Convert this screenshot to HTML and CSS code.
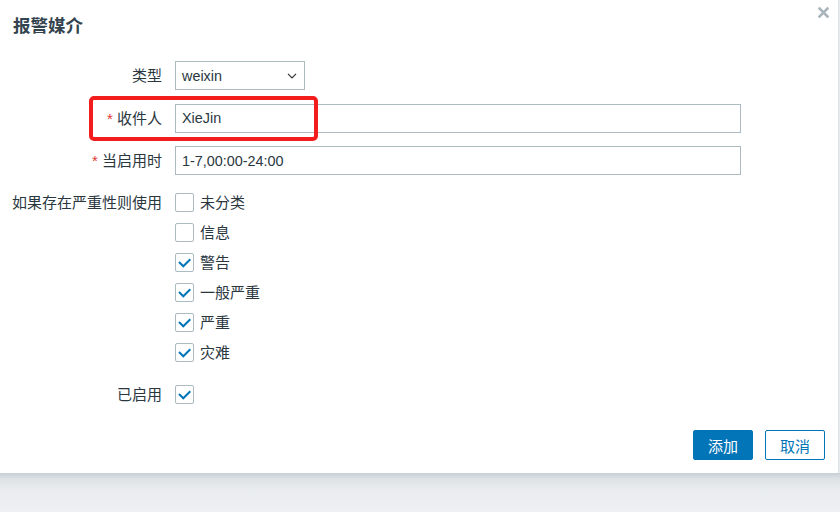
FILE: index.html
```html
<!DOCTYPE html>
<html lang="zh-CN">
<head>
  <meta charset="UTF-8">
  <meta name="viewport" content="width=device-width, initial-scale=1.0">
  <title>报警媒介</title>
  <link rel="stylesheet" href="styles.css">
</head>
<body>
  <div class="overlay-dialogue">
    <div class="dialogue-header">
      <h4>报警媒介</h4>
      <button class="btn-close" title="关闭">
        <svg width="11" height="11" viewBox="0 0 11 11"><path d="M1.5 1.5 L9.5 9.5 M9.5 1.5 L1.5 9.5" stroke="#a9b4bb" stroke-width="2.6" stroke-linecap="square"/></svg>
      </button>
    </div>

    <form class="form-list">
      <!-- 类型 -->
      <label class="form-label" for="mediatype">类型</label>
      <div class="form-field">
        <div class="select">
          <span>weixin</span>
          <svg width="10" height="6" viewBox="0 0 10 6"><path d="M1 0.8 L5 4.8 L9 0.8" fill="none" stroke="#333" stroke-width="1.2"/></svg>
        </div>
      </div>

      <!-- 收件人 -->
      <label class="form-label" for="sendto"><span class="asterisk">*</span> 收件人</label>
      <div class="form-field highlight-row">
        <input class="text-input" id="sendto" type="text" value="XieJin">
        <div class="mark-box"></div>
      </div>

      <!-- 当启用时 -->
      <label class="form-label" for="period"><span class="asterisk">*</span> 当启用时</label>
      <div class="form-field">
        <input class="text-input" id="period" type="text" value="1-7,00:00-24:00">
      </div>

      <!-- 严重性 -->
      <label class="form-label label-top severity-label">如果存在严重性则使用</label>
      <ul class="checkbox-list severity-field">
        <li><span class="checkbox"></span>未分类</li>
        <li><span class="checkbox"></span>信息</li>
        <li><span class="checkbox checked"><svg width="19" height="19" viewBox="0 0 19 19"><path d="M4 9 L8.3 13.3 L15.3 6.3" fill="none" stroke="#0275b8" stroke-width="2"/></svg></span>警告</li>
        <li><span class="checkbox checked"><svg width="19" height="19" viewBox="0 0 19 19"><path d="M4 9 L8.3 13.3 L15.3 6.3" fill="none" stroke="#0275b8" stroke-width="2"/></svg></span>一般严重</li>
        <li><span class="checkbox checked"><svg width="19" height="19" viewBox="0 0 19 19"><path d="M4 9 L8.3 13.3 L15.3 6.3" fill="none" stroke="#0275b8" stroke-width="2"/></svg></span>严重</li>
        <li><span class="checkbox checked"><svg width="19" height="19" viewBox="0 0 19 19"><path d="M4 9 L8.3 13.3 L15.3 6.3" fill="none" stroke="#0275b8" stroke-width="2"/></svg></span>灾难</li>
      </ul>

      <!-- 已启用 -->
      <label class="form-label enabled-label">已启用</label>
      <div class="form-field enabled-field">
        <span class="checkbox checked"><svg width="19" height="19" viewBox="0 0 19 19"><path d="M4 9 L8.3 13.3 L15.3 6.3" fill="none" stroke="#0275b8" stroke-width="2"/></svg></span>
      </div>
    </form>

    <div class="dialogue-footer">
      <button class="btn btn-primary">添加</button>
      <button class="btn btn-alt">取消</button>
    </div>
  </div>
  <div class="backdrop"></div>
</body>
</html>
```

FILE: styles.css
```css
html, body {
  height: 100%;
}

body {
  margin: 0;
  padding: 0;
  display: flex;
  flex-direction: column;
  background: linear-gradient(90deg, #fff 838px, #d3d9dd 838px, #e9ecee 839px);
  font-family: "Liberation Sans", Arial, "Noto Sans CJK SC", sans-serif;
  color: #2a373f;
  font-size: 15px;
}

.overlay-dialogue {
  width: 838px;
  height: 473px;
  flex-shrink: 0;
  box-sizing: border-box;
  background: #fff;
  display: flex;
  flex-direction: column;
}

.backdrop {
  flex: 1;
  background: linear-gradient(180deg, #c8d0d5 0, #dde2e6 6px, #e9ecef 16px, #eef0f2 39px);
}

.dialogue-header {
  display: flex;
  justify-content: space-between;
  padding: 0 0 0 13px;
  height: 61px;
}

.dialogue-header h4 {
  margin: 0;
  padding-top: 13px;
  font-size: 17.5px;
  font-weight: bold;
  color: #34444e;
  line-height: 26px;
}

.btn-close {
  border: 0;
  background: none;
  padding: 0;
  margin: 7px 9px 0 0;
  width: 11px;
  height: 11px;
  display: flex;
  cursor: pointer;
}

.form-list {
  display: grid;
  grid-template-columns: 162px 566px;
  column-gap: 13px;
  row-gap: 13.5px;
  margin: 0;
}

.form-label {
  text-align: right;
  line-height: 29px;
  white-space: nowrap;
}

.asterisk {
  color: #e33734;
}

.form-field {
  display: flex;
  align-items: center;
}

.select {
  width: 130px;
  height: 29px;
  box-sizing: border-box;
  border: 1px solid #acbbc2;
  display: flex;
  align-items: center;
  justify-content: space-between;
  padding: 0 7px 0 6px;
  font-size: 14.4px;
}

.text-input {
  width: 566px;
  height: 29px;
  box-sizing: border-box;
  border: 1px solid #acbbc2;
  border-radius: 0;
  padding: 0 6px;
  font-family: "Liberation Sans", Arial, sans-serif;
  font-size: 14.4px;
  color: #2a373f;
  outline: none;
}

.highlight-row {
  position: relative;
}

/* red annotation box over the 收件人 row */
.mark-box {
  position: absolute;
  left: -86px;
  top: -8px;
  width: 229px;
  height: 45px;
  box-sizing: border-box;
  border: 4px solid #f41d1d;
  border-radius: 5px;
  pointer-events: none;
}

.label-top {
  line-height: 19px;
}

.severity-label {
  margin-top: 4px;
}

.checkbox-list {
  list-style: none;
  margin: 4px 0 0;
  padding: 0;
  display: flex;
  flex-direction: column;
  gap: 11px;
}

.checkbox-list li {
  display: flex;
  align-items: center;
  gap: 6px;
  height: 19px;
  line-height: 19px;
}

.checkbox {
  width: 19px;
  height: 19px;
  box-sizing: border-box;
  border: 1px solid #acbbc2;
  border-radius: 2px;
  background: #fff;
  display: inline-flex;
  position: relative;
}

.checkbox svg {
  position: absolute;
  left: -1px;
  top: -1px;
}

.enabled-label {
  margin-top: 10px;
  line-height: 19px;
}

.enabled-field {
  margin-top: 10px;
}

.dialogue-footer {
  margin-top: auto;
  display: flex;
  justify-content: flex-end;
  gap: 12px;
  padding: 0 13px 13px 0;
}

.btn {
  width: 60px;
  height: 30px;
  box-sizing: border-box;
  border-radius: 2px;
  font-family: "Noto Sans CJK SC", sans-serif;
  font-size: 15px;
  padding: 0;
  cursor: pointer;
}

.btn-primary {
  background: #0275b8;
  border: 1px solid #0275b8;
  color: #fff;
}

.btn-alt {
  background: #fff;
  border: 1px solid #0275b8;
  color: #0275b8;
}
```
